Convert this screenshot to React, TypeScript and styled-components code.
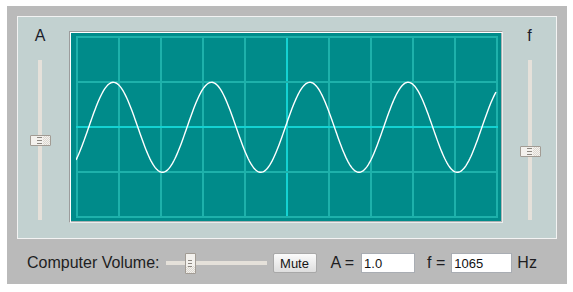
import * as React from 'react';
import styled, { createGlobalStyle } from 'styled-components';

const GlobalStyle = createGlobalStyle`
  body {
    margin: 0;
    background: #fff;
    font-family: "Liberation Sans", Arial, sans-serif;
  }
`;

const Page = styled.div`
  padding: 6px 0 0 7px;
`;

const Outer = styled.div`
  width: 560px;
  height: 278px;
  box-sizing: border-box;
  background: #bababa;
  padding: 10px 0 0 10px;
`;

const Panel = styled.div`
  width: 540px;
  height: 223px;
  box-sizing: border-box;
  border: 1px solid #f3f3f3;
  background: #c2d1d0;
  display: flex;
  align-items: flex-start;
`;

const SideCol = styled.div<{ $w: number; $pr: number }>`
  width: ${(p) => p.$w}px;
  box-sizing: border-box;
  padding: 10px ${(p) => p.$pr}px 0 0;
  display: flex;
  flex-direction: column;
  align-items: center;
`;

const AxisLabel = styled.div`
  font-size: 16px;
  line-height: 18px;
  height: 18px;
  color: #1c1c2a;
`;

const VTrack = styled.div`
  position: relative;
  margin-top: 15px;
  width: 4px;
  height: 160px;
  background: #e5e1da;
`;

const HTrack = styled.div`
  position: relative;
  margin-left: 6px;
  width: 101px;
  height: 4px;
  background: #e5e1da;
`;

// slider knob: hatched on one side, three grip lines in the middle
const Thumb = styled.div<{ $vertical?: boolean }>`
  position: absolute;
  box-sizing: border-box;
  border: 1px solid #a29c94;
  border-radius: 1px;
  width: ${(p) => (p.$vertical ? 11 : 21)}px;
  height: ${(p) => (p.$vertical ? 21 : 11)}px;
  background:
    linear-gradient(${(p) => (p.$vertical ? 'to bottom' : 'to right')}, #f3f1ed 0 62%, transparent 62%),
    repeating-conic-gradient(#dcd8d1 0 25%, #f4f2ee 0 50%) 0 0 / 2px 2px;
  display: flex;
  align-items: center;
  justify-content: center;
  &::after {
    content: '';
    display: block;
    width: ${(p) => (p.$vertical ? 4 : 5)}px;
    height: 7px;
    margin-left: ${(p) => (p.$vertical ? 0 : -2)}px;
    background: repeating-linear-gradient(to bottom, #8c8780 0 1px, transparent 1px 3px);
  }
`;

const Scope = styled.div`
  margin-top: 14px;
  width: 434px;
  height: 192px;
  box-sizing: border-box;
  border: 1px solid;
  border-color: #9c9c9c #ececec #ececec #9c9c9c;
  box-shadow: inset 1px 1px 0 #ffffff, inset -1px -1px 0 #a9b3b3;
  background: #008b8a;
  padding: 4px 4px 4px 6px;
`;

const Screen = styled.svg`
  display: block;
`;

const Row = styled.div`
  height: 45px;
  box-sizing: border-box;
  padding: 3px 0 0 10px;
  display: flex;
  align-items: center;
  font-size: 16px;
  color: #1e1e22;
`;

const Text = styled.span<{ $ml?: number }>`
  line-height: 18px;
  margin-left: ${(p) => p.$ml || 0}px;
  white-space: pre;
`;

const MuteButton = styled.button`
  margin-left: 6px;
  width: 44px;
  height: 20px;
  padding: 0;
  box-sizing: border-box;
  border: 1px solid #a8a8a8;
  border-radius: 2px;
  background: linear-gradient(#fbfbfb, #dedede);
  font-family: "Liberation Sans", Arial, sans-serif;
  font-size: 13px;
  color: #151515;
`;

const Field = styled.input<{ $w: number; $ml: number }>`
  margin-left: ${(p) => p.$ml}px;
  width: ${(p) => p.$w}px;
  height: 20px;
  box-sizing: border-box;
  border: 1px solid #a9adb3;
  padding: 1px 2px;
  background: #fff;
  font-family: "Liberation Sans", Arial, sans-serif;
  font-size: 13px;
  color: #111;
  outline: none;
`;

const GRID = '#1eb1ab';
const CENTER = '#14d2d2';

function wavePath() {
  const pts: string[] = [];
  for (let lx = 0; lx <= 420; lx += 1) {
    const gx = 76 + lx;
    const gy = 127.3 - 45 * Math.sin((2 * Math.PI * (gx - 88.7)) / 98.3);
    pts.push(`${lx === 0 ? 'M' : 'L'}${lx.toFixed(1)} ${(gy - 36).toFixed(2)}`);
  }
  return pts.join(' ');
}

const Oscilloscope = () => {
  const vLines = Array.from({ length: 11 }, (_, k) => k);
  const hLines = Array.from({ length: 5 }, (_, k) => k);
  return (
    <Screen width={422} height={182} viewBox="0 0 422 182">
      {vLines.map((k) => (
        <line key={'v' + k} x1={1 + 42 * k} y1={0} x2={1 + 42 * k} y2={182}
          stroke={k === 5 ? CENTER : GRID} strokeWidth={2} />
      ))}
      {hLines.map((k) => (
        <line key={'h' + k} x1={0} y1={1 + 45 * k} x2={422} y2={1 + 45 * k}
          stroke={k === 2 ? CENTER : GRID} strokeWidth={2} />
      ))}
      <path d={wavePath()} fill="none" stroke="#ffffff" strokeWidth={1.4} />
    </Screen>
  );
};

export default function App() {
  return (
    <Page>
      <GlobalStyle />
      <Outer>
        <Panel>
          <SideCol $w={51} $pr={7}>
            <AxisLabel>A</AxisLabel>
            <VTrack>
              <Thumb style={{ left: -8, top: 75 }} />
            </VTrack>
          </SideCol>
          <Scope>
            <Oscilloscope />
          </Scope>
          <SideCol $w={53} $pr={0}>
            <AxisLabel>f</AxisLabel>
            <VTrack>
              <Thumb style={{ left: -8, top: 86 }} />
            </VTrack>
          </SideCol>
        </Panel>
        <Row>
          <Text>Computer Volume:</Text>
          <HTrack>
            <Thumb $vertical style={{ left: 19, top: -8 }} />
          </HTrack>
          <MuteButton>Mute</MuteButton>
          <Text $ml={14}>A =</Text>
          <Field $w={54} $ml={7} defaultValue="1.0" />
          <Text $ml={12}>f =</Text>
          <Field $w={61} $ml={6} defaultValue="1065" />
          <Text $ml={5}>Hz</Text>
        </Row>
      </Outer>
    </Page>
  );
}
